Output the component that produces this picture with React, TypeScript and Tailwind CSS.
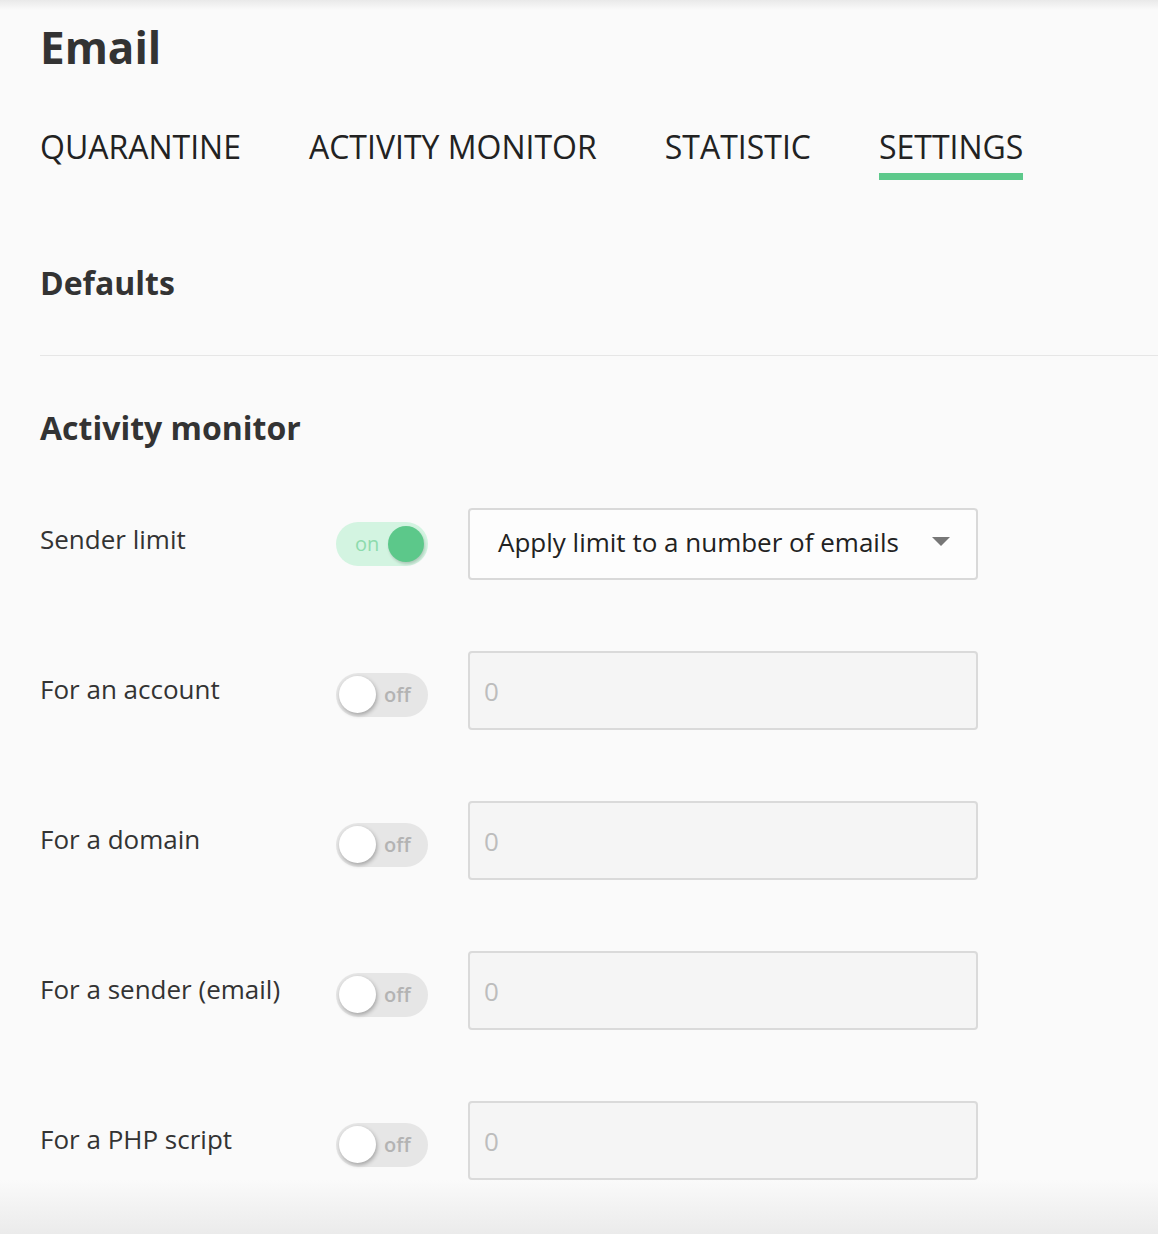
import React from "react";

const tabs = [
  { label: "QUARANTINE", active: false },
  { label: "ACTIVITY MONITOR", active: false },
  { label: "STATISTIC", active: false },
  { label: "SETTINGS", active: true },
];

const limits = ["For an account", "For a domain", "For a sender (email)", "For a PHP script"];

function Toggle({ on }: { on: boolean }) {
  if (on) {
    return (
      <div className="relative flex h-[44px] w-[92px] shrink-0 items-center rounded-full bg-[#d3f4e1]">
        <span className="ml-[19px] text-[20px] leading-none text-[#8ddbad]">on</span>
        <div className="absolute right-[4px] top-[4px] h-[36px] w-[36px] rounded-full bg-[#5cc88a] shadow-[1px_2px_3px_rgba(0,0,0,0.18)]" />
      </div>
    );
  }
  return (
    <div className="relative flex h-[44px] w-[92px] shrink-0 items-center rounded-full bg-[#e6e6e6]">
      <span className="ml-[48px] text-[20px] font-semibold leading-none text-[#b3b3b3]">off</span>
      <div className="absolute left-[3px] top-[3px] h-[37px] w-[37px] rounded-full bg-white shadow-[1px_2px_4px_rgba(0,0,0,0.3)]" />
    </div>
  );
}

export default function App() {
  return (
    <div className="min-h-[1234px] w-full bg-[#fafafa] font-['Open_Sans',sans-serif] text-[#333]">
      <div className="h-[10px] bg-gradient-to-b from-[#e9e9e9] to-[#fafafa]" />

      <div className="pl-[40px]">
        {/* header */}
        <h1 className="mt-[15px] text-[44px] font-bold leading-[44px] text-[#333]">Email</h1>

        {/* tabs */}
        <div className="mt-[62px] flex gap-[68px]">
          {tabs.map((tab) => (
            <div key={tab.label} className="flex flex-col">
              <span className="text-[32px] leading-[32px] text-[#222]">{tab.label}</span>
              <div className={tab.active ? "mt-[10px] h-[7px] bg-[#5dc98b]" : "mt-[10px] h-[7px]"} />
            </div>
          ))}
        </div>

        <h2 className="mt-[87px] text-[32px] font-bold leading-[32px]">Defaults</h2>
        <div className="mt-[56px] h-px bg-[#e6e6e6]" />

        <h2 className="mt-[56px] text-[32px] font-bold leading-[32px]">Activity monitor</h2>

        {/* settings rows */}
        <div className="mt-[64px] flex flex-col gap-[71px]">
          <div className="flex items-center">
            <span className="mb-[10px] w-[296px] shrink-0 text-[26px] leading-[26px]">Sender limit</span>
            <Toggle on />
            <div className="ml-[40px] flex h-[72px] w-[510px] items-center justify-between rounded-[4px] border-2 border-[#d9d9d9] bg-[#fdfdfd] pl-[28px] pr-[26px]">
              <span className="mb-[4px] text-[26px] leading-[26px] text-[#222]">Apply limit to a number of emails</span>
              <svg width="18" height="10" viewBox="0 0 18 10" className="mt-[-4px]">
                <path d="M0 0 H18 L9 9 Z" fill="#777" />
              </svg>
            </div>
          </div>

          {limits.map((label) => (
            <div key={label} className="flex items-center">
              <span className="mb-[3px] w-[296px] shrink-0 text-[26px] leading-[26px]">{label}</span>
              <div className="mt-[8px]">
                <Toggle on={false} />
              </div>
              <div className="ml-[40px] flex h-[79px] w-[510px] items-center rounded-[4px] border-2 border-[#dadada] bg-[#f5f5f5] pl-[14px]">
                <span className="text-[26px] leading-[26px] text-[#bdbdbd]">0</span>
              </div>
            </div>
          ))}
        </div>
      </div>

      <div className="h-[54px] bg-gradient-to-b from-[#fafafa] to-[#ebebeb]" />
    </div>
  );
}
